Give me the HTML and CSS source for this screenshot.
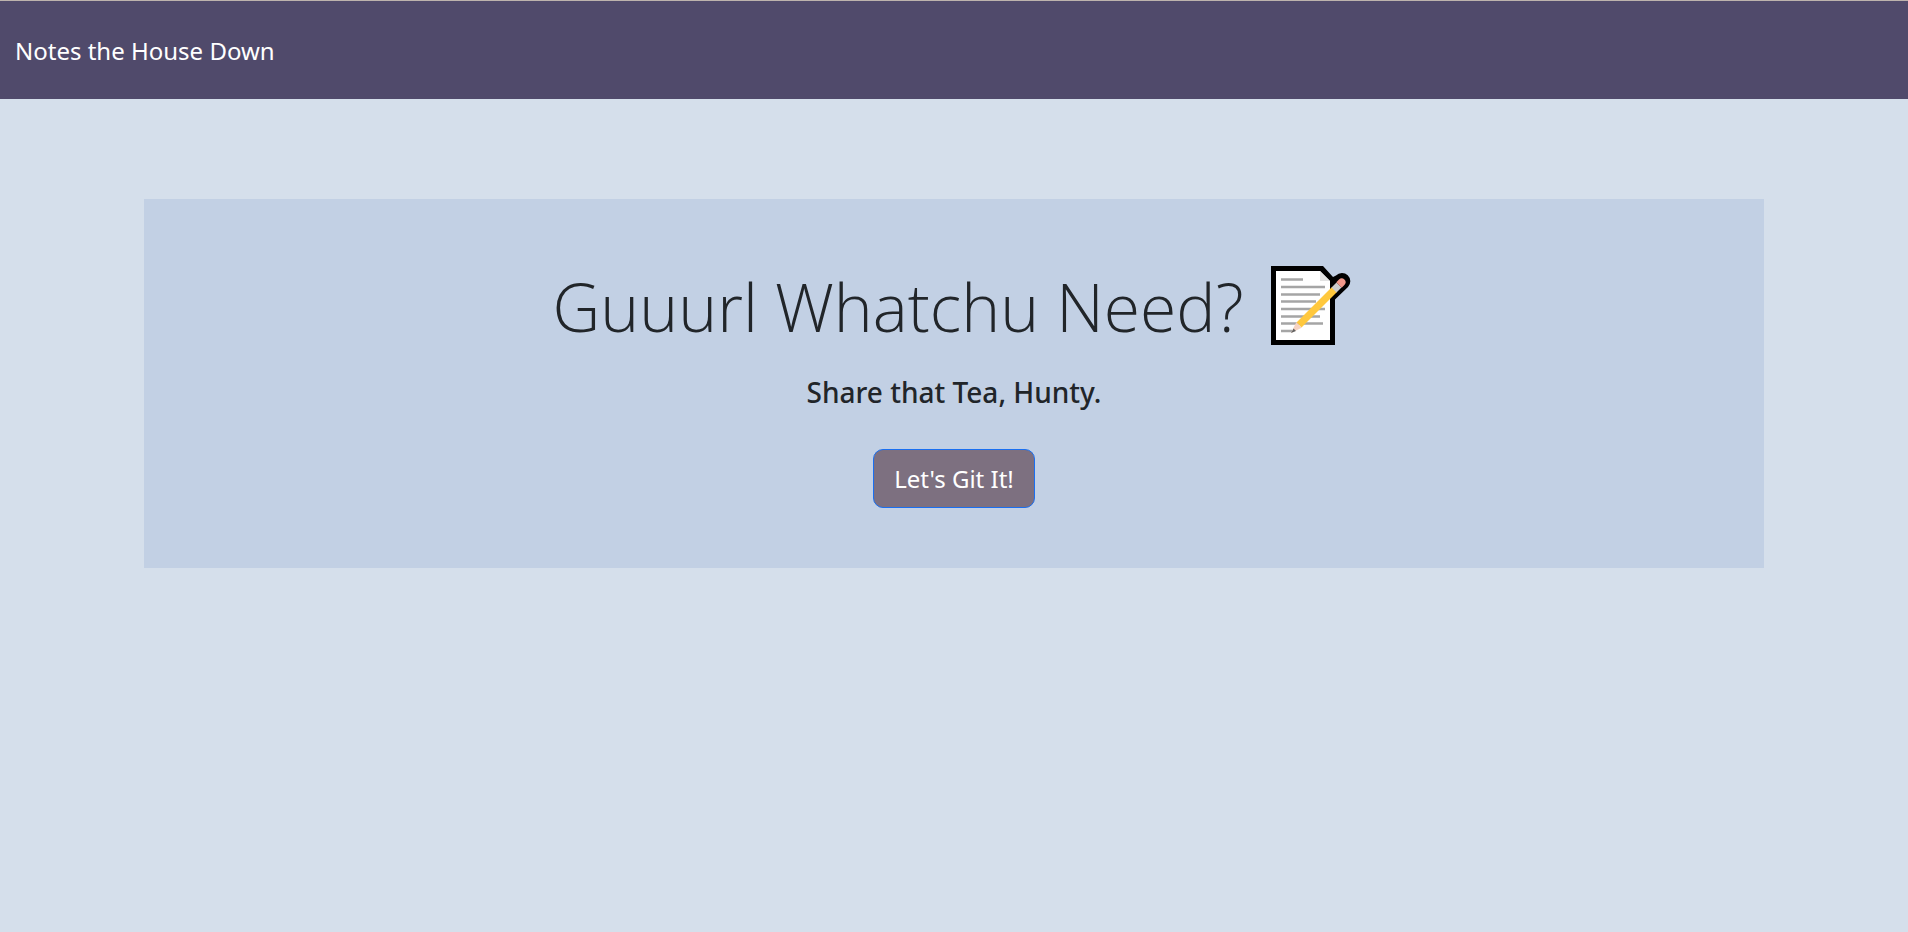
FILE: index.html
```html
<!DOCTYPE html>
<html lang="en">
<head>
<meta charset="utf-8">
<meta name="viewport" content="width=device-width, initial-scale=1">
<title>Notes the House Down</title>
<link rel="stylesheet" href="styles.css">
</head>
<body>
<header class="navbar">
  <a class="navbar-brand" href="#">Notes the House Down</a>
</header>
<main class="container">
  <section class="hero">
    <h1 class="hero-title">
      <span>Guuurl Whatchu Need?</span>
      <svg class="memo" viewBox="0 0 80 80" role="img" aria-label="Memo">
        <path d="M0 0H52L62 11L65 9.500A8 8 0 0 1 77 21L64 33.500V79H0Z" fill="#000"/>
        <path d="M5 5H49L59 15V74H5Z" fill="#fff"/>
        <path d="M49 5V15H59Z" fill="#e3e3e3"/>
        <path d="M10 13.500H32M10 21H54M10 28.500H49M10 35.500H45M10 43H54M10 50.500H49M10 57.500H52M10 65H21" stroke="#a5a5a5" stroke-width="2.500"/>
        <path d="M28 59L63.500 23.500" stroke="#ffc83d" stroke-width="7"/>
        <path d="M63 24L68 19" stroke="#ccc" stroke-width="7"/>
        <path d="M65.300 16.300L68 13.600A3.700 3.700 0 0 1 73.400 19L70.700 21.700Z" fill="#f1988a"/>
        <path d="M25.300 56.300L30.700 61.700L20 67Z" fill="#f7d3c2"/>
        <path d="M22.500 62.500L25 65L20 67Z" fill="#636363"/>
      </svg>
    </h1>
    <h2 class="hero-subtitle">Share that Tea, Hunty.</h2>
    <a class="button" href="#">Let's Git It!</a>
  </section>
</main>
</body>
</html>
```
FILE: styles.css
```css
* { box-sizing: border-box; }

body {
  margin: 0;
  min-height: 100vh;
  background: #d5dfeb;
  color: #212529;
  font-family: "Segoe UI", "Noto Sans", "Open Sans", sans-serif;
  font-size: 20px;
  line-height: 1.5;
}

.navbar {
  display: flex;
  align-items: center;
  padding: 31px 15px 29px;
  border-top: 1px solid #bdb3ad;
  background: #504a6b;
}

.navbar-brand {
  color: #fff;
  font-size: 24px;
  line-height: 38px;
  text-decoration: none;
}

.container {
  max-width: 1650px;
  margin: 100px auto 0;
  padding: 0 15px;
}

.hero {
  display: flex;
  flex-direction: column;
  align-items: center;
  padding: 60px 20px;
  background: #c2d0e4;
  text-align: center;
}

.hero-title {
  display: flex;
  align-items: center;
  justify-content: center;
  gap: 28px;
  margin: 0 0 20px;
  font-family: "Segoe UI", "Open Sans", "Noto Sans", sans-serif;
  font-size: 66px;
  font-weight: 200;
  line-height: 94px;
}

.memo {
  flex: none;
  width: 80px;
  height: 80px;
  margin-right: 4px;
}

.hero-subtitle {
  margin: 0 0 38px;
  font-size: 28px;
  font-weight: 500;
  line-height: 38px;
}

.button {
  padding: 10px 20px;
  border: 1px solid #1a6ff0;
  border-radius: 10px;
  background: #7d7080;
  color: #fff;
  font-size: 24px;
  line-height: 37px;
  text-decoration: none;
}
```
